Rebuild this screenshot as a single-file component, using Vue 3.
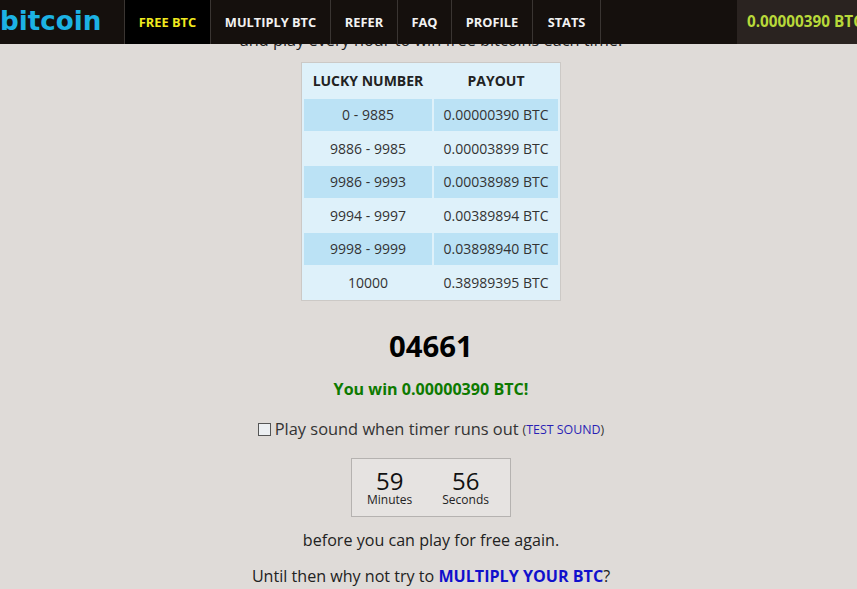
<template>
  <div class="page">
    <nav class="topbar">
      <div class="logo">bitcoin</div>
      <a
        v-for="item in menu"
        :key="item.label"
        class="menu-item"
        :class="{ active: item.active }"
        :style="{ width: item.width + 'px' }"
      >{{ item.label }}</a>
      <div class="spacer"></div>
      <div class="balance">0.00000390 BTC</div>
    </nav>

    <main class="content">
      <p class="intro">and play every hour to win free bitcoins each time.</p>

      <table class="payout">
        <thead>
          <tr>
            <th class="col-number">LUCKY NUMBER</th>
            <th class="col-payout">PAYOUT</th>
          </tr>
        </thead>
        <tbody>
          <tr v-for="row in payouts" :key="row.range">
            <td>{{ row.range }}</td>
            <td>{{ row.amount }}</td>
          </tr>
        </tbody>
      </table>

      <div class="roll">04661</div>
      <div class="win">You win 0.00000390 BTC!</div>

      <label class="sound">
        <span class="checkbox"></span>
        <span>Play sound when timer runs out</span>
        <span class="test">(<a>TEST SOUND</a>)</span>
      </label>

      <div class="timer">
        <div class="unit">
          <span class="num">59</span>
          <span class="cap">Minutes</span>
        </div>
        <div class="unit">
          <span class="num">56</span>
          <span class="cap">Seconds</span>
        </div>
      </div>

      <p class="again">before you can play for free again.</p>
      <p class="until">Until then why not try to <a>MULTIPLY YOUR BTC</a>?</p>
    </main>
  </div>
</template>

<script setup>
const menu = [
  { label: 'FREE BTC', width: 86, active: true },
  { label: 'MULTIPLY BTC', width: 120 },
  { label: 'REFER', width: 67 },
  { label: 'FAQ', width: 54 },
  { label: 'PROFILE', width: 81 },
  { label: 'STATS', width: 68 }
]

const payouts = [
  { range: '0 - 9885', amount: '0.00000390 BTC' },
  { range: '9886 - 9985', amount: '0.00003899 BTC' },
  { range: '9986 - 9993', amount: '0.00038989 BTC' },
  { range: '9994 - 9997', amount: '0.00389894 BTC' },
  { range: '9998 - 9999', amount: '0.03898940 BTC' },
  { range: '10000', amount: '0.38989395 BTC' }
]
</script>

<style>
html,
body {
  margin: 0;
  background: #dfdbd8;
  overflow: hidden;
}
</style>

<style scoped>
.page {
  height: 589px;
  overflow: hidden;
  background: #dfdbd8;
  font-family: "Open Sans", sans-serif;
  color: #222;
  position: relative;
}

.topbar {
  position: absolute;
  top: 0;
  left: 0;
  right: 0;
  height: 44px;
  display: flex;
  align-items: stretch;
  background: #15100d;
  white-space: nowrap;
  overflow: hidden;
}

.logo {
  width: 124px;
  flex: none;
  box-sizing: border-box;
  font-family: "DejaVu Sans", sans-serif;
  font-size: 26.2px;
  font-weight: 700;
  line-height: 43px;
  color: #1cb2e4;
}

.menu-item {
  flex: none;
  box-sizing: border-box;
  border-left: 1px solid #3a3532;
  text-align: center;
  font-size: 12.8px;
  font-weight: 700;
  line-height: 44px;
  color: #f2f2f2;
}

.menu-item.active {
  background: #000;
  color: #f0e91e;
}

.spacer {
  flex: 1;
  border-left: 1px solid #3a3532;
}

.balance {
  flex: none;
  width: 120px;
  box-sizing: border-box;
  padding-left: 10px;
  background: #2a2320;
  color: #b8d93a;
  font-size: 15.3px;
  font-weight: 700;
  line-height: 43px;
  overflow: hidden;
}

.content {
  display: flex;
  flex-direction: column;
  align-items: center;
  padding-left: 5px;
}

.intro {
  margin: 29px 0 0;
  font-size: 16.3px;
  line-height: 22px;
  height: 11px;
}

.payout {
  margin-top: 22px;
  box-sizing: border-box;
  width: 260px;
  height: 239px;
  border: 1px solid #ccc9c6;
  border-spacing: 2px;
  background: #def1fa;
  font-size: 14px;
  text-align: center;
}

.payout th {
  height: 30px;
  padding: 0 0 2px;
  font-weight: 700;
  color: #222;
}

.col-number {
  width: 128px;
}

.payout td {
  padding: 0;
  height: 31.4px;
  color: #333;
}

.payout tbody tr:nth-child(odd) td {
  background: #bbe2f5;
}

.roll {
  margin-top: 25px;
  font-size: 29.3px;
  font-weight: 700;
  line-height: 40px;
  color: #000;
}

.win {
  margin-top: 12px;
  font-size: 16.1px;
  font-weight: 700;
  line-height: 22px;
  color: #0d7a00;
}

.sound {
  margin-top: 17px;
  display: flex;
  align-items: center;
  font-size: 16.4px;
  line-height: 22px;
  color: #333;
}

.checkbox {
  width: 11px;
  height: 11px;
  margin-right: 4px;
  border: 1px solid #555;
  background: #eceff2;
}

.test {
  margin-left: 4px;
  font-size: 12.4px;
  padding-top: 2px;
}

.test a {
  color: #2a1fb5;
}

.timer {
  margin-top: 17px;
  box-sizing: border-box;
  width: 160px;
  height: 59px;
  display: flex;
  justify-content: center;
  gap: 30px;
  padding: 9px 6px 0 0;
  background: #e6e3e1;
  border: 1px solid #b5b2b0;
}

.unit {
  display: flex;
  flex-direction: column;
  align-items: center;
}

.num {
  font-size: 24px;
  line-height: 26px;
  color: #111;
}

.cap {
  font-size: 12px;
  line-height: 12px;
  color: #222;
}

.again {
  margin: 12px 0 0;
  font-size: 16.1px;
  line-height: 22px;
}

.until {
  margin: 14px 0 0;
  font-size: 16.1px;
  line-height: 22px;
}

.until a {
  font-weight: 700;
  color: #1010cc;
}
</style>
